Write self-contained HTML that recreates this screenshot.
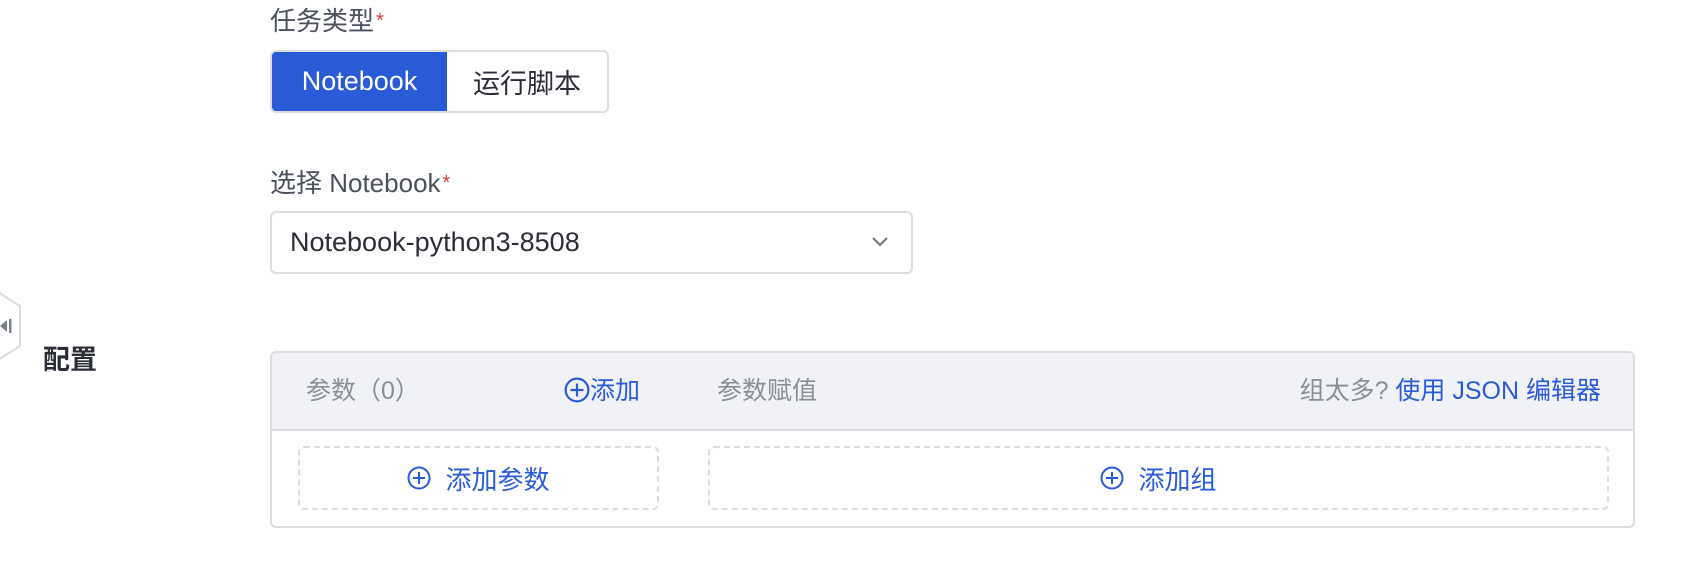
<!DOCTYPE html>
<html><head><meta charset="utf-8"><style>
*{box-sizing:border-box;margin:0;padding:0}
body{width:1704px;height:562px;background:#fff;position:relative;overflow:hidden;font-family:"Liberation Sans","Noto Sans CJK SC",sans-serif;}
.abs{position:absolute;white-space:nowrap}
.lbl{font-size:26px;color:#4b505c;line-height:32px}
.req{color:#e03a3a;font-size:20px;vertical-align:top;margin-left:2px}
.seg{left:270px;top:50px;width:339px;height:63px;border:2px solid #dcdde3;border-radius:6px;display:flex;overflow:hidden}
.seg div{display:flex;align-items:center;justify-content:center;font-size:27px}
.sel{left:270px;top:211px;width:643px;height:63px;border:2px solid #dcdde3;border-radius:6px;font-size:27px;color:#2b2e36;padding-left:18px;line-height:59px}
.tbl{left:270px;top:351px;width:1365px;height:177px;border:2px solid #dcdde3;border-radius:6px;overflow:hidden}
.hd{position:absolute;left:0;top:0;width:100%;height:78px;background:#f1f2f8;border-bottom:2px solid #dcdde3}
.ht{font-size:25px;color:#8a8e99;line-height:32px;top:22px}
.blue{color:#2a5bd7}
.dash{border:2px dashed #dcdde3;border-radius:6px;top:93px;height:64px;display:flex;align-items:center;justify-content:center;font-size:26px;color:#2a5bd7}
</style></head><body>
<div class="abs lbl" style="left:270px;top:5px">任务类型<span class="req">*</span></div>
<div class="abs seg"><div style="width:175px;background:#2a5bd7;color:#fff">Notebook</div><div style="flex:1;color:#2b2e36">运行脚本</div></div>
<div class="abs lbl" style="left:270px;top:167px">选择 Notebook<span class="req">*</span></div>
<div class="abs sel">Notebook-python3-8508
<svg style="position:absolute;right:22px;top:23px" width="18" height="12" viewBox="0 0 18 12"><path d="M2 2l7 7 7-7" fill="none" stroke="#6b707a" stroke-width="2"/></svg></div>
<svg class="abs" style="left:0;top:290px" width="22" height="72" viewBox="0 0 22 72"><path d="M-2 2L20 16V56L-2 70" fill="#fff" stroke="#dcdde3" stroke-width="2"/><path d="M0 36l7-6v12z" fill="#7a7f8a"/><rect x="9" y="29" width="2.5" height="14" fill="#7a7f8a"/></svg>
<div class="abs" style="left:43px;top:338px;font-size:27px;font-weight:bold;color:#2b2e36">配置</div>
<div class="abs tbl">
 <div class="hd">
  <div class="abs ht" style="left:34px">参数（0）</div>
  <div class="abs ht blue" style="left:292px"><svg width="26" height="26" viewBox="0 0 24 24" style="vertical-align:-4px"><circle cx="12" cy="12" r="10.5" fill="none" stroke="#2a5bd7" stroke-width="2"/><path d="M12 6v12M6 12h12" stroke="#2a5bd7" stroke-width="2"/></svg>添加</div>
  <div class="abs ht" style="left:445px">参数赋值</div>
  <div class="abs ht" style="right:32px">组太多? <span class="blue">使用 JSON 编辑器</span></div>
 </div>
 <div class="abs dash" style="left:26px;width:361px"><svg width="24" height="24" viewBox="0 0 24 24" style="margin-right:14px"><circle cx="12" cy="12" r="10.5" fill="none" stroke="#2a5bd7" stroke-width="2"/><path d="M12 6v12M6 12h12" stroke="#2a5bd7" stroke-width="2"/></svg>添加参数</div>
 <div class="abs dash" style="left:436px;width:901px"><svg width="24" height="24" viewBox="0 0 24 24" style="margin-right:14px"><circle cx="12" cy="12" r="10.5" fill="none" stroke="#2a5bd7" stroke-width="2"/><path d="M12 6v12M6 12h12" stroke="#2a5bd7" stroke-width="2"/></svg>添加组</div>
</div>
</body></html>
